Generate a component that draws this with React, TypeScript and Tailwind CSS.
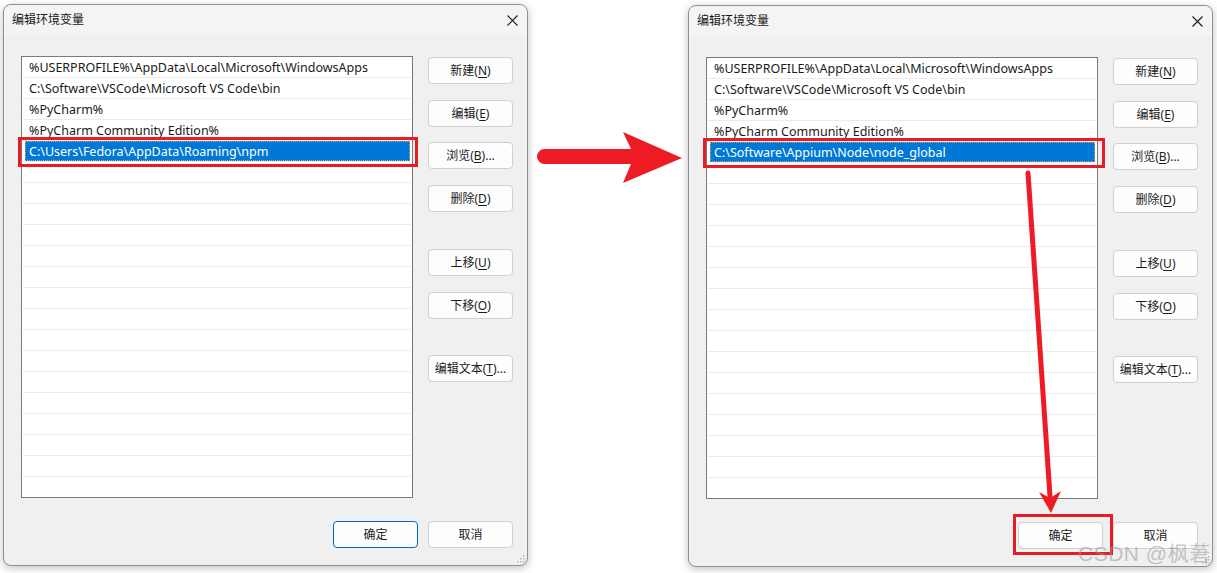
import React from 'react';

const FONT = '"Noto Sans", "Noto Sans CJK SC", sans-serif';

const leftRows = [
  '%USERPROFILE%\\AppData\\Local\\Microsoft\\WindowsApps',
  'C:\\Software\\VSCode\\Microsoft VS Code\\bin',
  '%PyCharm%',
  '%PyCharm Community Edition%',
  'C:\\Users\\Fedora\\AppData\\Roaming\\npm',
];

const rightRows = [
  '%USERPROFILE%\\AppData\\Local\\Microsoft\\WindowsApps',
  'C:\\Software\\VSCode\\Microsoft VS Code\\bin',
  '%PyCharm%',
  '%PyCharm Community Edition%',
  'C:\\Software\\Appium\\Node\\node_global',
];

type BtnProps = {
  pre: string;
  hot?: string;
  post?: string;
  primary?: boolean;
  className?: string;
};

const Btn = ({ pre, hot, post, primary, className }: BtnProps) => (
  <div
    className={`flex h-[27px] w-[85px] items-center justify-center rounded-[4px] border bg-[#fdfdfd] text-[12px] text-[#1b1b1b] ${
      primary ? 'border-[#0067c0]' : 'border-[#d0d0d0]'
    } ${className ?? ''}`}
  >
    <span className="leading-none">
      {pre}
      {hot && <u className="underline-offset-2">{hot}</u>}
      {post}
    </span>
  </div>
);

const Grip = () => (
  <svg width="8" height="8" viewBox="0 0 8 8" className="absolute bottom-[2px] right-[2px]">
    <rect x="6" y="0" width="1.5" height="1.5" fill="#b8b8b8" />
    <rect x="3" y="3" width="1.5" height="1.5" fill="#b8b8b8" />
    <rect x="6" y="3" width="1.5" height="1.5" fill="#b8b8b8" />
    <rect x="0" y="6" width="1.5" height="1.5" fill="#b8b8b8" />
    <rect x="3" y="6" width="1.5" height="1.5" fill="#b8b8b8" />
    <rect x="6" y="6" width="1.5" height="1.5" fill="#b8b8b8" />
  </svg>
);

type DialogProps = {
  rows: string[];
  selected: number;
  okPrimary?: boolean;
  children?: React.ReactNode;
};

const Dialog = ({ rows, selected, okPrimary, children }: DialogProps) => {
  const all = [...rows, ...Array(17).fill('')];
  return (
    <div className="relative flex h-[562px] w-[525px] flex-col rounded-[8px] border border-[#8f8f8f] bg-[#f0f0f0] shadow-[0_2px_8px_rgba(0,0,0,0.25)]">
      {/* title bar */}
      <div className="flex h-[30px] items-center justify-between rounded-t-[8px] bg-[#f4f4f5] pl-[8px] pr-[9px]">
        <span className="text-[12px] text-[#1a1a1a]">编辑环境变量</span>
        <svg width="11" height="11" viewBox="0 0 11 11">
          <path d="M0.5 0.5 L10.5 10.5 M10.5 0.5 L0.5 10.5" stroke="#1a1a1a" strokeWidth="1.1" />
        </svg>
      </div>

      <div className="flex pl-[17px] pt-[21px]">
        {/* list box */}
        <div className="h-[442px] w-[392px] overflow-hidden border border-[#7a7a7a] bg-white px-[1px]">
          {all.slice(0, 22).map((r, i) => (
            <div key={i} className="h-[21px] border-b border-[#ebebeb]">
              {i === selected ? (
                <div className="ml-[2px] mr-[1px] flex h-[20px] items-center border border-dotted border-[#e0a060] bg-[#0078d7] pl-[3px] pt-[2px] text-[12.5px] text-white">
                  {r}
                </div>
              ) : (
                <div className="flex h-[20px] items-center pl-[6px] pt-[2px] text-[12.5px] text-[#1a1a1a]">{r}</div>
              )}
            </div>
          ))}
        </div>

        {/* side buttons */}
        <div className="ml-[15px] flex flex-col pt-[1px]">
          <Btn pre="新建(" hot="N" post=")" />
          <Btn pre="编辑(" hot="E" post=")" className="mt-[16px]" />
          <Btn pre="浏览(" hot="B" post=")..." className="mt-[15px]" />
          <Btn pre="删除(" hot="D" post=")" className="mt-[16px]" />
          <Btn pre="上移(" hot="U" post=")" className="mt-[37px]" />
          <Btn pre="下移(" hot="O" post=")" className="mt-[16px]" />
          <Btn pre="编辑文本(" hot="T" post=")..." className="mt-[36px]" />
        </div>
      </div>

      {/* bottom buttons */}
      <div className="mt-[23px] flex justify-end gap-[10px] pr-[14px]">
        <Btn pre="确定" primary={okPrimary} />
        <Btn pre="取消" />
      </div>

      <Grip />
      {children}
    </div>
  );
};

const RedBox = ({ className }: { className: string }) => (
  <div className={`pointer-events-none absolute border-[3px] border-[#e81c24] ${className}`} />
);

export default function App() {
  return (
    <div className="relative flex h-[573px] w-[1217px] overflow-hidden bg-white" style={{ fontFamily: FONT }}>
      <div className="pl-[3px] pt-[4px]">
        <Dialog rows={leftRows} selected={4} okPrimary>
          <RedBox className="left-[14px] top-[132px] h-[30px] w-[400px]" />
        </Dialog>
      </div>

      {/* right arrow */}
      <div className="w-[160px] shrink-0">
        <svg width="160" height="60" viewBox="0 0 160 60" className="mt-[128px]">
          <path
            d="M16.5 21 L103 21 L95 4 L154 30 L95 55 L103 36 L16.5 36 A7.5 7.5 0 0 1 16.5 21 Z"
            fill="#ed1c24"
          />
        </svg>
      </div>

      <div className="shrink-0 pt-[5px]">
        <Dialog rows={rightRows} selected={4}>
          <RedBox className="left-[14px] top-[132px] h-[30px] w-[402px]" />
          <RedBox className="left-[324px] top-[508px] h-[41px] w-[100px]" />
          <svg width="523" height="560" className="pointer-events-none absolute left-0 top-0">
            <line x1="339" y1="167" x2="361" y2="490" stroke="#ed1c24" strokeWidth="5" strokeLinecap="round" />
            <path d="M350 486 L361 492 L372 485 L362 507 Z" fill="#ed1c24" />
          </svg>
        </Dialog>
      </div>

      <div
        className="absolute left-[1078px] top-[543px] text-[21px] leading-none tracking-[0.5px] text-[rgba(150,150,150,0.55)]"
        style={{ fontFamily: '"Liberation Sans", "Noto Sans CJK SC", sans-serif' }}
      >
        CSDN @枫莙
      </div>
    </div>
  );
}
